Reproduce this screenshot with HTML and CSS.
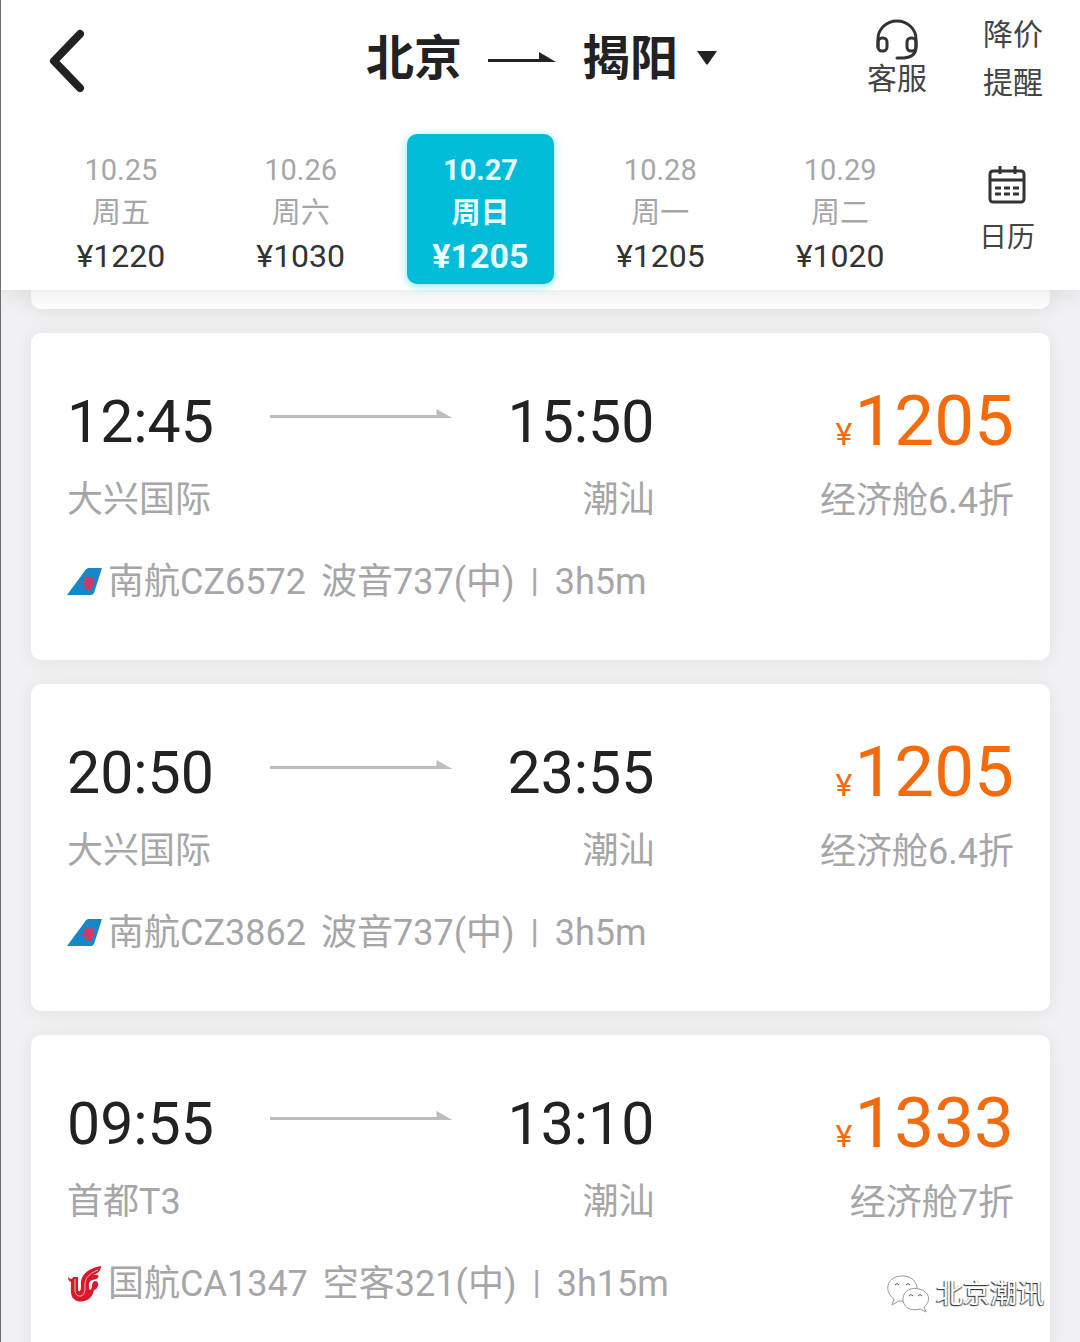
FILE: index.html
```html
<!DOCTYPE html>
<html lang="zh-CN">
<head>
    <meta charset="UTF-8">
    <meta name="viewport" content="width=device-width, initial-scale=1.0">
    <title>北京 - 揭阳 机票</title>
    <link rel="stylesheet" href="styles.css">
</head>
<body>
    <!-- Shared icons -->
    <svg class="sprite" aria-hidden="true">
        <symbol id="route-arrow" viewBox="0 0 184 12" preserveAspectRatio="none">
            <path d="M0 7H168V1L184 10H0z"/>
        </symbol>
        <symbol id="logo-cz" viewBox="0 0 36 28">
            <path d="M0 27L17 4Q19 0 22 0H35L27 25Q26 27 24 27z" fill="#1787c8"/>
            <path d="M17 11l3-3 2 2 4-1v4l2 3-3 2-1 5-3-2-3 1v-4l-3-3 3-2z" fill="#e2335c"/>
            <path d="M20 12l4 2-3 4M18 16l4 0" fill="none" stroke="#8a4f96" stroke-width="1"/>
        </symbol>
        <symbol id="logo-ca" viewBox="0 0 36 36">
            <path d="M1 11Q5 15 6 11H11V23Q11 26 13 25Q14 24 14 20C13 10 19 3 34 0C34 4 32 7 26 9C32 8 32 10 31 12Q28 14 25 14C21 16 22 19 22 23L24 24L25 20Q25 15 29 15Q32 16 31 20Q30 23 27 24Q26 29 23 32C19 36 11 37 7 33C3 30 4 22 4 16Q1 15 1 11z" fill="#d9182b"/>
            <path d="M8 13V25Q9 31 14 30Q18 29 18 22C17 13 21 8 31 4" fill="none" stroke="#f6b5ba" stroke-width="1"/>
        </symbol>
    </svg>

    <header class="header">
        <div class="top-bar">
            <button class="back-btn" aria-label="返回">
                <svg viewBox="0 -4 40 70" width="40" height="70"><path d="M33 6L7 33L33 60" fill="none" stroke="#222" stroke-width="8" stroke-linecap="round" stroke-linejoin="round"/></svg>
            </button>
            <button class="route">
                <span>北京</span>
                <svg viewBox="0 0 68 14" width="68" height="14"><path d="M0 7H51V0L68 10H0z" fill="#222"/></svg>
                <span>揭阳</span>
                <svg class="caret" viewBox="0 0 22 18" width="22" height="18"><path d="M1 1H21L12 14Q11 15 10 14z" fill="#222"/></svg>
            </button>
            <div class="actions">
                <button class="action service">
                    <svg viewBox="0 0 42 42" width="42" height="42" fill="none" stroke="#333" stroke-width="3" stroke-linecap="round">
                        <path d="M2 28V20A19 18 0 0 1 40 20V28Q40 38 28 39H21"/>
                        <rect x="2" y="19" width="9" height="13" rx="4"/>
                        <rect x="31" y="19" width="9" height="13" rx="4"/>
                    </svg>
                    <span>客服</span>
                </button>
                <button class="action alert">降价<br>提醒</button>
            </div>
        </div>

        <nav class="dates">
            <button class="date"><span class="day">10.25</span><span class="week">周五</span><span class="low">¥1220</span></button>
            <button class="date"><span class="day">10.26</span><span class="week">周六</span><span class="low">¥1030</span></button>
            <button class="date active"><span class="day">10.27</span><span class="week">周日</span><span class="low">¥1205</span></button>
            <button class="date"><span class="day">10.28</span><span class="week">周一</span><span class="low">¥1205</span></button>
            <button class="date"><span class="day">10.29</span><span class="week">周二</span><span class="low">¥1020</span></button>
            <button class="calendar">
                <svg viewBox="0 0 38 38" width="38" height="38" fill="none" stroke="#333" stroke-width="3">
                    <rect x="2" y="5" width="34" height="31" rx="3"/>
                    <path d="M2 14H36M12 0V8M27 0V8"/>
                    <path d="M7 22H31M7 28H31" stroke-dasharray="6 3"/>
                </svg>
                <span>日历</span>
            </button>
        </nav>
    </header>

    <main class="flights">
        <div class="card card-tail"></div>

        <article class="card">
            <div class="trip">
                <div class="stop">
                    <div class="time">12:45</div>
                    <div class="place">大兴国际</div>
                </div>
                <svg class="arrow"><use href="#route-arrow"/></svg>
                <div class="stop arrive">
                    <div class="time">15:50</div>
                    <div class="place">潮汕</div>
                </div>
                <div class="fare">
                    <div class="price"><small>¥</small>1205</div>
                    <div class="place">经济舱6.4折</div>
                </div>
            </div>
            <div class="info">
                <svg class="logo"><use href="#logo-cz"/></svg>
                <span>南航CZ6572</span>
                <span class="plane">波音737(中)</span>
                <span class="bar">|</span>
                <span>3h5m</span>
            </div>
        </article>

        <article class="card">
            <div class="trip">
                <div class="stop">
                    <div class="time">20:50</div>
                    <div class="place">大兴国际</div>
                </div>
                <svg class="arrow"><use href="#route-arrow"/></svg>
                <div class="stop arrive">
                    <div class="time">23:55</div>
                    <div class="place">潮汕</div>
                </div>
                <div class="fare">
                    <div class="price"><small>¥</small>1205</div>
                    <div class="place">经济舱6.4折</div>
                </div>
            </div>
            <div class="info">
                <svg class="logo"><use href="#logo-cz"/></svg>
                <span>南航CZ3862</span>
                <span class="plane">波音737(中)</span>
                <span class="bar">|</span>
                <span>3h5m</span>
            </div>
        </article>

        <article class="card">
            <div class="trip">
                <div class="stop">
                    <div class="time">09:55</div>
                    <div class="place">首都T3</div>
                </div>
                <svg class="arrow"><use href="#route-arrow"/></svg>
                <div class="stop arrive">
                    <div class="time">13:10</div>
                    <div class="place">潮汕</div>
                </div>
                <div class="fare">
                    <div class="price"><small>¥</small>1333</div>
                    <div class="place">经济舱7折</div>
                </div>
            </div>
            <div class="info">
                <svg class="logo tall"><use href="#logo-ca"/></svg>
                <span>国航CA1347</span>
                <span class="plane">空客321(中)</span>
                <span class="bar">|</span>
                <span>3h15m</span>
            </div>
        </article>
    </main>

    <!-- Account watermark -->
    <div class="watermark">
        <svg viewBox="0 0 44 40" width="44" height="40" fill="#fff" stroke="#999" stroke-width="1">
            <path d="M6 31L8 25C-2 18 0 3 15 2C26 1 32 9 31 16C30 24 22 28 13 27z"/>
            <path d="M40 38L34 35C24 38 16 32 17 24C18 16 26 13 33 15C43 17 46 27 38 33z"/>
            <path d="M9 11q2-3 4 0M20 11q2-3 4 0M23 22q2-3 4 0M32 22q2-3 4 0" fill="none" stroke="#555"/>
        </svg>
        <span>北京潮讯</span>
    </div>
</body>
</html>
```
FILE: styles.css
```css
:root {
    --bg: #f1f1f3;
    --primary: #00bcd8;
    --price: #f56a0c;
    --text-main: #222;
    --text-dim: #a6a6a8;
}

* {
    box-sizing: border-box;
}

body {
    margin: 0;
    height: 100vh;
    display: flex;
    flex-direction: column;
    overflow: hidden;
    background: var(--bg);
    border-left: 1px solid #6e6e6e;
    color: var(--text-main);
    font-family: Roboto, "Noto Sans CJK SC", sans-serif;
}

button {
    padding: 0;
    border: none;
    background: none;
    color: inherit;
    font-family: inherit;
    cursor: pointer;
}

svg {
    display: block;
    flex: none;
}

.sprite {
    position: absolute;
    width: 0;
    height: 0;
}

/* Header */
.header {
    position: relative;
    z-index: 1;
    flex: none;
    background: #fff;
    padding-bottom: 6px;
    box-shadow: 0 2px 24px rgba(0, 0, 0, 0.1);
}

.top-bar {
    display: grid;
    grid-template-columns: 1fr auto 1fr;
    align-items: center;
    height: 118px;
    padding: 0 37px 0 40px;
}

.back-btn {
    justify-self: start;
    padding-left: 6px;
}

.route {
    display: flex;
    align-items: center;
    gap: 26px;
    font-size: 48px;
    line-height: 72px;
    font-weight: 700;
}

.caret {
    margin-left: -8px;
}

.actions {
    display: flex;
    justify-content: flex-end;
    gap: 56px;
    color: #444;
}

.action {
    font-size: 30px;
    line-height: 48px;
}

.service {
    display: flex;
    flex-direction: column;
    align-items: center;
    padding-top: 8px;
    line-height: 36px;
}

/* Date strip */
.dates {
    display: grid;
    grid-template-columns: repeat(5, 1fr) 150px;
    padding: 16px 0 0 30px;
}

.date {
    justify-self: center;
    display: flex;
    flex-direction: column;
    align-items: center;
    width: 147px;
    height: 150px;
    padding-top: 15px;
    border-radius: 10px;
    font-size: 29px;
    line-height: 43px;
    color: var(--text-dim);
}

.low {
    font-size: 32px;
    color: #333;
}

.date.active {
    background: var(--primary);
    color: #e9feff;
    font-weight: 700;
    box-shadow: 0 2px 8px rgba(0, 220, 240, 0.5);
}

.active .low {
    font-size: 34px;
    color: inherit;
}

.calendar {
    display: flex;
    flex-direction: column;
    align-items: center;
    gap: 14px;
    padding: 32px 0 0 4px;
    font-size: 28px;
    line-height: 40px;
    color: #444;
}

/* Flight list */
.flights {
    flex: 1;
    min-height: 0;
    overflow: hidden;
    display: flex;
    flex-direction: column;
    gap: 24px;
    padding: 0 30px;
}

.card {
    flex: none;
    background: #fff;
    border-radius: 10px;
    padding: 52px 36px 54px;
    box-shadow: 0 2px 20px rgba(0, 0, 0, 0.07);
}

.card-tail {
    height: 19px;
    padding: 0;
    border-radius: 0 0 10px 10px;
}

.trip {
    display: grid;
    grid-template-columns: 40fr 36fr 40fr 71fr;
}

.time {
    font-size: 59px;
    line-height: 74px;
}

.place {
    margin-top: 17px;
    font-size: 36px;
    line-height: 48px;
    color: var(--text-dim);
}

.arrow {
    width: 100%;
    height: 12px;
    margin-top: 23px;
    fill: #bdbdbd;
}

.arrive,
.fare {
    text-align: right;
}

.price {
    font-size: 71px;
    line-height: 72px;
    color: var(--price);
}

.price small {
    margin-right: 2px;
    font-size: 32px;
    line-height: 32px;
}

.fare .place {
    margin-top: 20px;
}

.info {
    display: flex;
    align-items: center;
    margin-top: 33px;
    font-size: 36px;
    line-height: 48px;
    color: var(--text-dim);
}

.logo {
    width: 36px;
    height: 28px;
    margin-right: 5px;
}

.logo.tall {
    height: 36px;
}

.plane {
    margin-left: 15px;
}

.bar {
    align-self: flex-start;
    margin: 0 16px;
    font-size: 34px;
    line-height: 44px;
}

/* Watermark */
.watermark {
    position: absolute;
    right: 36px;
    bottom: 28px;
    z-index: 2;
    display: flex;
    align-items: center;
    gap: 6px;
    font-size: 27px;
    line-height: 40px;
    color: #fff;
    text-shadow: -1px 1px 1px #333, 1px 1px 1px #777;
}
```
